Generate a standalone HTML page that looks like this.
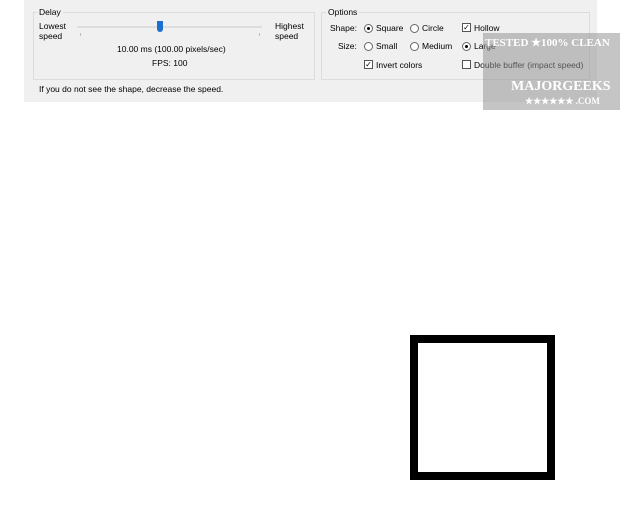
<!DOCTYPE html><html><head><style>
body{margin:0;width:640px;height:517px;background:#fff;position:relative;overflow:hidden;font-family:"Liberation Sans",sans-serif;font-size:8.5px;color:#000}
.a{position:absolute}
.panel{left:24px;top:0;width:573px;height:102px;background:#f0f0f0}
.grp{border:1px solid #dcdcdc;}
.lg{background:#f0f0f0;padding:0 2px}
.rad{display:inline-block;width:9px;height:9px;border-radius:50%;border:1px solid #666;background:#fff;position:absolute;box-sizing:border-box}
.rad.on::after{content:"";position:absolute;left:2px;top:2px;width:3px;height:3px;border-radius:50%;background:#000}
.chk{width:9px;height:9px;border:1px solid #555;background:#fff;box-sizing:border-box;position:absolute;font-size:8px;line-height:7px;text-align:center}
</style></head><body>
<div class="a panel"></div>
<div class="a grp" style="left:33px;top:12px;width:280px;height:66px"></div>
<div class="a lg" style="left:37px;top:7px">Delay</div>
<div class="a" style="left:39px;top:21px;line-height:10px">Lowest<br>speed</div>
<div class="a" style="left:275px;top:21px;line-height:10px">Highest<br>speed</div>
<div class="a" style="left:77px;top:26px;width:185px;height:2px;background:#ddd"></div>
<div class="a" style="left:157px;top:21px;width:6px;height:11px;background:#1a6fd0;border-radius:0 0 3px 3px"></div>
<div class="a" style="left:80px;top:33px;width:1px;height:3px;background:#bbb"></div>
<div class="a" style="left:259px;top:33px;width:1px;height:3px;background:#bbb"></div>
<div class="a" style="left:117px;top:44px">10.00 ms (100.00 pixels/sec)</div>
<div class="a" style="left:152px;top:58px">FPS: 100</div>
<div class="a" style="left:39px;top:84px">If you do not see the shape, decrease the speed.</div>

<div class="a grp" style="left:321px;top:12px;width:267px;height:66px"></div>
<div class="a lg" style="left:326px;top:7px">Options</div>
<div class="a" style="left:330px;top:23px">Shape:</div>
<div class="a" style="left:338px;top:41px">Size:</div>
<span class="rad on" style="left:364px;top:24px"></span><div class="a" style="left:376px;top:23px">Square</div>
<span class="rad" style="left:410px;top:24px"></span><div class="a" style="left:422px;top:23px">Circle</div>
<span class="rad" style="left:364px;top:42px"></span><div class="a" style="left:376px;top:41px">Small</div>
<span class="rad" style="left:410px;top:42px"></span><div class="a" style="left:422px;top:41px">Medium</div>
<span class="rad on" style="left:462px;top:42px"></span><div class="a" style="left:474px;top:41px">Large</div>
<div class="chk" style="left:462px;top:23px">✓</div><div class="a" style="left:474px;top:23px">Hollow</div>
<div class="chk" style="left:364px;top:60px">✓</div><div class="a" style="left:376px;top:60px">Invert colors</div>
<div class="chk" style="left:462px;top:60px"></div><div class="a" style="left:474px;top:60px">Double buffer (impact speed)</div>

<div class="a" style="left:483px;top:33px;width:137px;height:77px;background:rgba(150,150,150,.55);color:#fff;font-family:'Liberation Serif',serif;font-weight:bold;overflow:hidden">
<div class="a" style="left:2px;top:3px;font-size:11px;white-space:nowrap">TESTED ★100% CLEAN</div>
<div class="a" style="left:28px;top:46px;font-size:14px">MAJORGEEKS</div>
<div class="a" style="left:42px;top:63px;font-size:9px;white-space:nowrap">★★★★★★ .COM</div>
</div>

<div class="a" style="left:410px;top:335px;width:145px;height:145px;border:8px solid #000;box-sizing:border-box"></div>
</body></html>
